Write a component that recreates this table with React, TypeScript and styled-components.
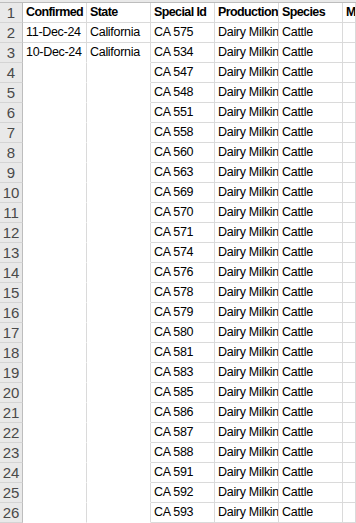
import React from 'react';
import styled, { createGlobalStyle } from 'styled-components';

const GlobalStyle = createGlobalStyle`
  html, body {
    margin: 0;
    padding: 0;
    background: #ffffff;
    overflow: hidden;
  }
`;

const Sheet = styled.div`
  display: grid;
  grid-template-columns: 23px 64px 64px 64px 64px 64px 1fr;
  width: 356px;
  font-family: 'Liberation Sans', Arial, sans-serif;
  font-size: 12.5px;
  color: #000000;
`;

const ColHeaderStrip = styled.div`
  grid-column: 1 / -1;
  height: 2px;
  background: #e9e9e9;
  border-bottom: 1px solid #bdbdbd;
`;

const RowHeader = styled.div`
  box-sizing: border-box;
  height: 20px;
  background: #e9e9e9;
  border-right: 1px solid #bdbdbd;
  border-bottom: 1px solid #d4d4d4;
  color: #4a4a4a;
  font-size: 15px;
  line-height: 19px;
  text-align: center;
`;

const Cell = styled.div<{ $bold?: boolean; $open?: boolean }>`
  box-sizing: border-box;
  height: 20px;
  padding-left: 3px;
  border-right: 1px solid #dadada;
  border-bottom: 1px solid ${p => (p.$open ? '#ffffff' : '#dadada')};
  font-weight: ${p => (p.$bold ? 700 : 400)};
  letter-spacing: ${p => (p.$bold ? '-0.6px' : '-0.3px')};
  line-height: 19px;
  white-space: nowrap;
  overflow: hidden;
`;

const ids = [
  575, 534, 547, 548, 551, 558, 560, 563, 569, 570, 571, 574, 576, 578, 579,
  580, 581, 583, 585, 586, 587, 588, 591, 592, 593,
];

const rows = ids.map((id, i) => ({
  confirmed: i === 0 ? '11-Dec-24' : i === 1 ? '10-Dec-24' : '',
  state: i < 2 ? 'California' : '',
  specialId: `CA ${id}`,
  production: 'Dairy Milking',
  species: 'Cattle',
}));

export default function App() {
  return (
    <>
      <GlobalStyle />
      <Sheet>
        <ColHeaderStrip />

        <RowHeader>1</RowHeader>
        <Cell $bold>Confirmed</Cell>
        <Cell $bold>State</Cell>
        <Cell $bold>Special Id</Cell>
        <Cell $bold>Production</Cell>
        <Cell $bold>Species</Cell>
        <Cell $bold>M</Cell>

        {rows.map((r, i) => (
          <React.Fragment key={r.specialId}>
            <RowHeader>{i + 2}</RowHeader>
            <Cell $open={i >= 1}>{r.confirmed}</Cell>
            <Cell $open={i >= 1}>{r.state}</Cell>
            <Cell>{r.specialId}</Cell>
            <Cell>{r.production}</Cell>
            <Cell>{r.species}</Cell>
            <Cell />
          </React.Fragment>
        ))}
      </Sheet>
    </>
  );
}
